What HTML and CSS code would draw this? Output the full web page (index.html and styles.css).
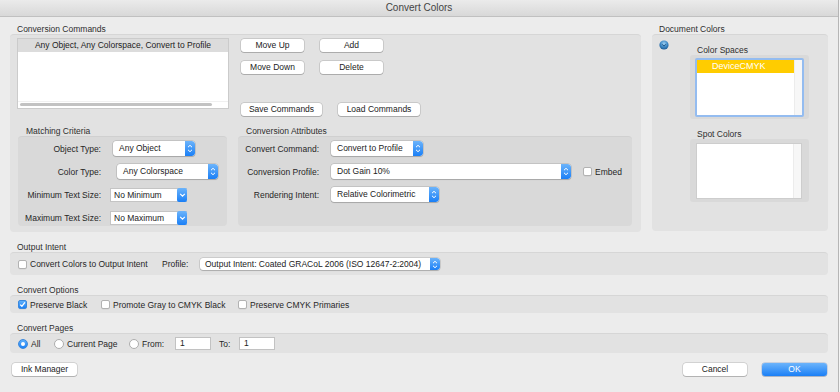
FILE: index.html
```html
<!DOCTYPE html>
<html>
<head>
<meta charset="utf-8">
<title>Convert Colors</title>
<link rel="stylesheet" href="styles.css">
</head>
<body>
<div class="window">
  <div class="titlebar">Convert Colors</div>
  <div class="content">
    <div class="top-row">
      <div class="main-col">
        <div class="sec-label top">Conversion Commands</div>
        <div class="panel main-panel">
          <div class="cmd-row">
            <div class="cmd-list">
              <div class="cmd-head">Any Object, Any Colorspace, Convert to Profile</div>
              <div class="cmd-body"></div>
              <div class="cmd-scroll"><div class="thumb"></div></div>
            </div>
            <div class="cmd-buttons">
              <div class="btn-row r1"><div class="btn w63">Move Up</div><div class="btn w63">Add</div></div>
              <div class="btn-row r2"><div class="btn w63">Move Down</div><div class="btn w63">Delete</div></div>
              <div class="btn-row r3"><div class="btn w81">Save Commands</div><div class="btn w82">Load Commands</div></div>
            </div>
          </div>
          <div class="sub-row">
            <div class="sub match">
              <div class="sub-label">Matching Criteria</div>
              <div class="subpanel form match-form">
                <div class="lbl">Object Type:</div>
                <div class="popup s-obj"><span class="txt">Any Object</span><span class="step"><svg width="6" height="9" viewBox="0 0 6 9"><path d="M1 3.2 L3 1.3 L5 3.2 M1 5.8 L3 7.7 L5 5.8" fill="none" stroke="#fff" stroke-width="1"/></svg></span></div>
                <div class="lbl">Color Type:</div>
                <div class="popup s-color"><span class="txt">Any Colorspace</span><span class="step"><svg width="6" height="9" viewBox="0 0 6 9"><path d="M1 3.2 L3 1.3 L5 3.2 M1 5.8 L3 7.7 L5 5.8" fill="none" stroke="#fff" stroke-width="1"/></svg></span></div>
                <div class="lbl">Minimum Text Size:</div>
                <div class="combo s-size"><span class="txt">No Minimum</span><span class="cstep"><svg width="7" height="6" viewBox="0 0 7 6"><path d="M1.2 1.8 L3.5 4.1 L5.8 1.8" fill="none" stroke="#fff" stroke-width="1.2"/></svg></span></div>
                <div class="lbl">Maximum Text Size:</div>
                <div class="combo s-size"><span class="txt">No Maximum</span><span class="cstep"><svg width="7" height="6" viewBox="0 0 7 6"><path d="M1.2 1.8 L3.5 4.1 L5.8 1.8" fill="none" stroke="#fff" stroke-width="1.2"/></svg></span></div>
              </div>
            </div>
            <div class="sub attrs">
              <div class="sub-label">Conversion Attributes</div>
              <div class="subpanel form attr-form">
                <div class="lbl">Convert Command:</div>
                <div class="cell"><div class="popup s-cmd"><span class="txt">Convert to Profile</span><span class="step"><svg width="6" height="9" viewBox="0 0 6 9"><path d="M1 3.2 L3 1.3 L5 3.2 M1 5.8 L3 7.7 L5 5.8" fill="none" stroke="#fff" stroke-width="1"/></svg></span></div></div>
                <div class="lbl">Conversion Profile:</div>
                <div class="cell"><div class="popup s-prof"><span class="txt">Dot Gain 10%</span><span class="step"><svg width="6" height="9" viewBox="0 0 6 9"><path d="M1 3.2 L3 1.3 L5 3.2 M1 5.8 L3 7.7 L5 5.8" fill="none" stroke="#fff" stroke-width="1"/></svg></span></div><span class="cb embed-cb"></span><span class="cb-text">Embed</span></div>
                <div class="lbl">Rendering Intent:</div>
                <div class="cell"><div class="popup s-intent"><span class="txt">Relative Colorimetric</span><span class="step"><svg width="6" height="9" viewBox="0 0 6 9"><path d="M1 3.2 L3 1.3 L5 3.2 M1 5.8 L3 7.7 L5 5.8" fill="none" stroke="#fff" stroke-width="1"/></svg></span></div></div>
              </div>
            </div>
          </div>
        </div>
      </div>
      <div class="doc-col">
        <div class="sec-label top">Document Colors</div>
        <div class="panel doc-panel">
          <div class="disclosure"><svg width="10" height="10" viewBox="0 0 10 10"><defs><radialGradient id="g" cx="50%" cy="35%" r="65%"><stop offset="0" stop-color="#9fd0f2"/><stop offset="0.6" stop-color="#3a86c4"/><stop offset="1" stop-color="#1d5a92"/></radialGradient></defs><circle cx="5" cy="5" r="4.6" fill="url(#g)"/><path d="M3.2 4.3 L5 6.2 L6.8 4.3" fill="none" stroke="#1a4f80" stroke-width="1"/></svg></div>
          <div class="doc-lists">
            <div class="list-label first">Color Spaces</div>
            <div class="list-well">
              <div class="list-box focus">
                <div class="list-items"><div class="sel-row">DeviceCMYK</div></div>
                <div class="list-track"></div>
              </div>
            </div>
            <div class="list-label">Spot Colors</div>
            <div class="list-well spot">
              <div class="list-box plain">
                <div class="list-items"></div>
                <div class="list-track"></div>
              </div>
            </div>
          </div>
        </div>
      </div>
    </div>

    <div class="sec-label">Output Intent</div>
    <div class="panel strip intent">
      <div class="item w-cc"><span class="cb"></span><span class="cb-text">Convert Colors to Output Intent</span></div>
      <div class="item w-prof">Profile:</div>
      <div class="popup s-out"><span class="txt">Output Intent: Coated GRACoL 2006 (ISO 12647-2:2004)</span><span class="step"><svg width="6" height="9" viewBox="0 0 6 9"><path d="M1 3.2 L3 1.3 L5 3.2 M1 5.8 L3 7.7 L5 5.8" fill="none" stroke="#fff" stroke-width="1"/></svg></span></div>
    </div>

    <div class="sec-label">Convert Options</div>
    <div class="panel strip options">
      <div class="item w-pb"><span class="cb checked"><svg width="7" height="7" viewBox="0 0 7 7"><path d="M1.2 3.6 L2.9 5.3 L5.9 1.3" fill="none" stroke="#fff" stroke-width="1.3"/></svg></span><span class="cb-text">Preserve Black</span></div>
      <div class="item w-pg"><span class="cb"></span><span class="cb-text">Promote Gray to CMYK Black</span></div>
      <div class="item"><span class="cb"></span><span class="cb-text">Preserve CMYK Primaries</span></div>
    </div>

    <div class="sec-label">Convert Pages</div>
    <div class="panel strip pages">
      <div class="item w-all"><span class="rb on"></span><span class="cb-text">All</span></div>
      <div class="item w-cur"><span class="rb"></span><span class="cb-text">Current Page</span></div>
      <div class="item w-from"><span class="rb"></span><span class="cb-text">From:</span></div>
      <div class="inp">1</div>
      <div class="item w-to">To:</div>
      <div class="inp">1</div>
    </div>

    <div class="bottom-row">
      <div class="btn w65 ink">Ink Manager</div>
      <div class="spacer"></div>
      <div class="btn w64">Cancel</div>
      <div class="btn w65 ok">OK</div>
    </div>
  </div>
</div>
</body>
</html>
```

FILE: styles.css
```css
* { box-sizing: border-box; margin: 0; padding: 0; }
html, body { width: 840px; height: 392px; overflow: hidden; }
body {
  background: #f4f4f4;
  font-family: "Liberation Sans", Arial, sans-serif;
  font-size: 8.5px;
  color: #262626;
}
.window {
  width: 839px;
  height: 392px;
  background: #ececec;
  border-right: 1px solid #b5b5b5;
  display: flex;
  flex-direction: column;
}
.titlebar {
  height: 17px;
  background: linear-gradient(#ebebeb, #d8d8d8);
  border-bottom: 1px solid #c0c0c0;
  text-align: center;
  font-size: 10px;
  line-height: 16px;
  color: #444;
}
.content { padding: 0 10px; display: flex; flex-direction: column; }

.top-row { display: flex; gap: 11px; }
.main-col { width: 631px; }
.doc-col { width: 176px; }

.sec-label { padding: 10px 0 0 7px; line-height: 10px; height: 20px; color: #2e2e2e; }
.sec-label.top { padding-top: 7px; height: 17px; }

.panel {
  background: #e2e2e2;
  border-top: 1px solid #d6d6d6;
  border-radius: 4px;
}
.main-panel { height: 198px; padding: 3px 0 0 7px; }

.cmd-row { display: flex; height: 82px; }
.cmd-list {
  width: 212px;
  height: 71px;
  background: #fff;
  border: 1px solid #cbcbcb;
  display: flex;
  flex-direction: column;
}
.cmd-head {
  height: 13px;
  background: #dcdcdc;
  text-align: center;
  line-height: 13px;
  color: #222;
}
.cmd-body { flex: 1; }
.cmd-scroll { height: 7px; padding: 1px 16px 2px 2px; border-top: 1px solid #f0f0f0; }
.cmd-scroll .thumb { height: 3px; background: #c2c2c2; border-radius: 2px; }

.cmd-buttons { margin-left: 12px; display: flex; flex-direction: column; }
.btn-row { display: flex; gap: 16px; }
.btn-row.r1 { margin-top: 1px; }
.btn-row.r2 { margin-top: 9px; }
.btn-row.r3 { margin-top: 29px; }

.btn {
  height: 13px;
  background: #fff;
  border-radius: 3px;
  box-shadow: 0 0 0 0.5px rgba(0,0,0,0.22), 0 1px 0.5px rgba(0,0,0,0.14);
  text-align: center;
  line-height: 13px;
  color: #222;
  white-space: nowrap;
}
.w63 { width: 63px; }
.w64 { width: 64px; }
.w65 { width: 65px; }
.w81 { width: 81px; }
.w82 { width: 82px; }

.sub-row { display: flex; gap: 11px; margin-left: 1px; }
.sub.match { width: 209px; }
.sub.attrs { width: 394px; }
.sub-label { height: 16px; padding: 6px 0 0 8px; line-height: 10px; color: #2e2e2e; }
.subpanel {
  height: 90px;
  background: #d9d9d9;
  border-top: 1px solid #d0d0d0;
  border-radius: 4px;
}
.form {
  display: grid;
  grid-auto-rows: 23px;
  align-items: center;
  align-content: start;
}
.match-form { grid-template-columns: 83px auto; }
.attr-form { grid-template-columns: 81px auto; }
.lbl { text-align: right; white-space: nowrap; color: #262626; }
.cell { display: flex; align-items: center; margin-left: 12px; }

.popup {
  display: flex;
  height: 15px;
  background: #fff;
  border-radius: 3px;
  box-shadow: 0 0 0 0.5px rgba(0,0,0,0.2), 0 1px 1px rgba(0,0,0,0.15);
  overflow: hidden;
}
.popup .txt { flex: 1; padding-left: 6px; line-height: 15px; white-space: nowrap; overflow: hidden; color: #222; }
.popup .step {
  width: 10px;
  background: linear-gradient(#6cb4fb, #1a7ff6);
  display: flex;
  align-items: center;
  justify-content: center;
  border-radius: 0 3px 3px 0;
}
.combo {
  display: flex;
  height: 14px;
  background: #fff;
  border: 1px solid #c4c4c4;
  border-right: none;
}
.combo .txt { flex: 1; padding-left: 3px; line-height: 12px; white-space: nowrap; color: #222; }
.combo .cstep {
  width: 10px;
  margin: -1px 0;
  background: linear-gradient(#6cb4fb, #1a7ff6);
  border-radius: 2px;
  display: flex;
  align-items: center;
  justify-content: center;
}

.s-obj { width: 82px; margin-left: 12px; }
.s-color { width: 101px; margin-left: 16px; }
.s-size { width: 77px; margin-left: 9px; }
.s-cmd { width: 92px; }
.s-prof { width: 240px; }
.s-intent { width: 108px; }
.s-out { width: 240px; height: 12px; }
.s-out .txt { line-height: 12px; padding-left: 5px; }

.cb {
  display: inline-flex;
  align-items: center;
  justify-content: center;
  width: 9px;
  height: 9px;
  flex: none;
  background: #fff;
  border: 1px solid #b2b2b2;
  border-radius: 2px;
  box-shadow: 0 0.5px 0 rgba(0,0,0,0.08);
}
.cb.checked {
  background: linear-gradient(#5fb0fb, #1b80f5);
  border-color: #3a88dd;
}
.embed-cb { margin-left: 12px; }
.cb-text { margin-left: 3px; white-space: nowrap; color: #262626; }

.rb {
  display: inline-flex;
  align-items: center;
  justify-content: center;
  width: 10px;
  height: 10px;
  flex: none;
  border-radius: 50%;
  background: #fff;
  border: 1px solid #adadad;
}
.rb.on {
  background: linear-gradient(#5fb0fb, #1b80f5);
  border-color: #3a88dd;
}
.rb.on::after {
  content: "";
  width: 4px;
  height: 4px;
  border-radius: 50%;
  background: #fff;
}

/* Document colors */
.doc-panel { height: 197px; display: flex; }
.disclosure { width: 10px; height: 10px; margin: 5px 0 0 7px; display: flex; }
.doc-lists { margin-left: 21px; width: 119px; }
.list-label { height: 20px; padding: 10px 0 0 7px; line-height: 10px; color: #2e2e2e; }
.list-well {
  height: 64px;
  background: #d9d9d9;
  border-radius: 3px;
  padding: 3px 5px 2px 5px;
}
.list-well.spot { height: 63px; padding: 4px 7px 3px 6px; }
.list-box { height: 100%; background: #fff; display: flex; }
.list-box.focus { border: 2px solid #94bcf0; border-radius: 2px; }
.list-box.plain { border: 1px solid #cdcdcd; }
.list-items { flex: 1; }
.list-track { width: 8px; background: #f7f7f7; border-left: 1px solid #ececec; }
.sel-row {
  height: 13px;
  background: #ffcc00;
  color: #fff;
  line-height: 13px;
  padding-left: 15px;
  font-size: 9px;
}

/* strips */
.strip { display: flex; align-items: center; padding-left: 8px; width: 818px; }
.intent { height: 23px; }
.options { height: 18px; }
.pages { height: 20px; }
.item { display: flex; align-items: center; white-space: nowrap; flex: none; color: #262626; }
.w-cc { width: 144px; }
.w-prof { width: 38px; }
.w-pb { width: 83px; }
.w-pg { width: 137px; }
.w-all { width: 36px; }
.w-cur { width: 75px; }
.w-from { width: 46px; }
.w-to { width: 20px; margin-left: 8px; }
.inp {
  width: 36px;
  height: 13px;
  background: #fff;
  border: 1px solid #c2c2c2;
  padding-left: 4px;
  line-height: 11px;
  color: #222;
}

.bottom-row { display: flex; margin-top: 10px; padding: 0 1px 0 2px; }
.spacer { flex: 1; }
.ok {
  margin-left: 15px;
  background: linear-gradient(#6cb4fb, #1a7ff6);
  color: #fff;
  box-shadow: 0 0 0 0.5px rgba(0,60,160,0.3), 0 1px 0.5px rgba(0,0,0,0.14);
}
```
